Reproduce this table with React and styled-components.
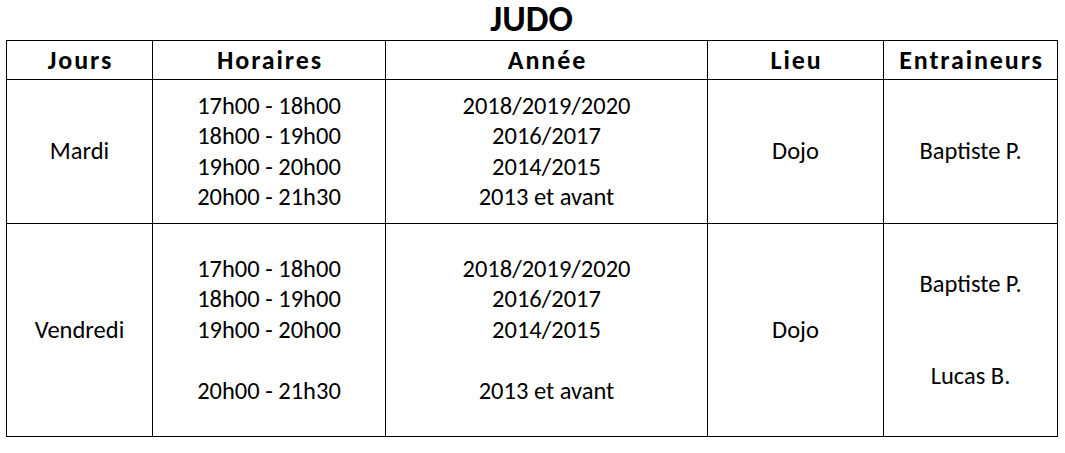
import styled, { createGlobalStyle } from 'styled-components'

const GlobalStyle = createGlobalStyle`
  body {
    margin: 0;
    background: #fff;
    font-family: Carlito, Calibri, "Liberation Sans", sans-serif;
    color: #000;
  }
`

const Page = styled.div`
  width: 1065px;
  height: 453px;
  padding: 0 0 0 6px;
  box-sizing: border-box;
`

const Title = styled.h1`
  width: 1051px;
  margin: 0;
  height: 40px;
  line-height: 39px;
  text-align: center;
  font-size: 36px;
  font-weight: 700;
`

const Table = styled.table`
  width: 1051px;
  border-collapse: collapse;
  table-layout: fixed;
`

const HeadCell = styled.th`
  border: 1px solid #000;
  height: 38px;
  padding: 0 0 0 2px;
  font-size: 26px;
  font-weight: 700;
  letter-spacing: 1.9px;
  text-align: center;
  vertical-align: middle;
`

const Cell = styled.td`
  border: 1px solid #000;
  height: ${(p) => p.$h}px;
  padding: 0;
  font-size: 24.5px;
  line-height: 30.5px;
  text-align: center;
  vertical-align: middle;
`

const Line = styled.div`
  height: 30.5px;
`

const columns = [
  { label: 'Jours', width: 146 },
  { label: 'Horaires', width: 233 },
  { label: 'Année', width: 322 },
  { label: 'Lieu', width: 176 },
  { label: 'Entraineurs', width: 174 },
]

const rows = [
  {
    height: 143,
    day: 'Mardi',
    hours: ['17h00 - 18h00', '18h00 - 19h00', '19h00 - 20h00', '20h00 - 21h30'],
    years: ['2018/2019/2020', '2016/2017', '2014/2015', '2013 et avant'],
    place: 'Dojo',
    coaches: ['Baptiste P.'],
  },
  {
    height: 212,
    day: 'Vendredi',
    hours: ['17h00 - 18h00', '18h00 - 19h00', '19h00 - 20h00', '', '20h00 - 21h30'],
    years: ['2018/2019/2020', '2016/2017', '2014/2015', '', '2013 et avant'],
    place: 'Dojo',
    coaches: ['Baptiste P.', '', '', 'Lucas B.'],
  },
]

const Lines = ({ items }) =>
  items.map((t, i) => <Line key={i}>{t}</Line>)

export default function App() {
  return (
    <Page>
      <GlobalStyle />
      <Title>JUDO</Title>
      <Table>
        <colgroup>
          {columns.map((c) => (
            <col key={c.label} style={{ width: c.width }} />
          ))}
        </colgroup>
        <thead>
          <tr>
            {columns.map((c) => (
              <HeadCell key={c.label}>{c.label}</HeadCell>
            ))}
          </tr>
        </thead>
        <tbody>
          {rows.map((r) => (
            <tr key={r.day}>
              <Cell $h={r.height}>{r.day}</Cell>
              <Cell $h={r.height}>
                <Lines items={r.hours} />
              </Cell>
              <Cell $h={r.height}>
                <Lines items={r.years} />
              </Cell>
              <Cell $h={r.height}>{r.place}</Cell>
              <Cell $h={r.height}>
                <Lines items={r.coaches} />
              </Cell>
            </tr>
          ))}
        </tbody>
      </Table>
    </Page>
  )
}
